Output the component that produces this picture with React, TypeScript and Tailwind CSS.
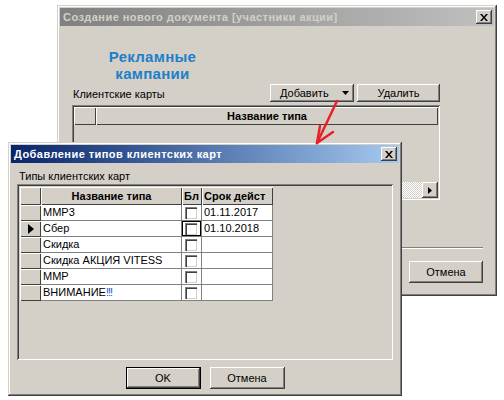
import React from "react";

const raised =
  "bg-[#d4d0c8] shadow-[inset_-1px_-1px_#404040,inset_1px_1px_#ffffff,inset_-2px_-2px_#808080,inset_2px_2px_#d4d0c8]";
const frame =
  "bg-[#d4d0c8] shadow-[inset_-1px_-1px_#404040,inset_1px_1px_#d4d0c8,inset_-2px_-2px_#808080,inset_2px_2px_#ffffff]";
const sunken =
  "shadow-[inset_1px_1px_#808080,inset_-1px_-1px_#ffffff,inset_2px_2px_#404040,inset_-2px_-2px_#d4d0c8]";
const hdr = "bg-[#d4d0c8] shadow-[inset_1px_1px_#ffffff,inset_-1px_-1px_#404040]";

function CloseBox() {
  return (
    <div className={`w-[16px] h-[14px] flex items-center justify-center ${raised}`}>
      <svg width="8" height="7" viewBox="0 0 8 7">
        <path d="M0 0h2l2 2.5L6 0h2L5 3.5 8 7H6L4 4.5 2 7H0l3-3.5z" fill="#000" />
      </svg>
    </div>
  );
}

function TitleBar({ text, active }: { text: string; active?: boolean }) {
  return (
    <div
      className={`h-[18px] flex items-center justify-between pl-[3px] pr-[2px] ${
        active ? "bg-linear-to-r from-[#0a246a] to-[#a6caf0]" : "bg-linear-to-r from-[#808080] to-[#c0c0c0]"
      }`}
    >
      <span
        className={`text-[11px] font-bold whitespace-nowrap tracking-[0.45px] ${
          active ? "text-white" : "text-[#d4d0c8]"
        }`}
      >
        {text}
      </span>
      <CloseBox />
    </div>
  );
}

function Btn({ children, className = "", def }: { children: React.ReactNode; className?: string; def?: boolean }) {
  if (def) {
    return (
      <div className={`border border-black ${className}`}>
        <div className={`w-full h-full flex items-center justify-center text-[11px] ${raised}`}>{children}</div>
      </div>
    );
  }
  return <div className={`flex items-center justify-center text-[11px] ${raised} ${className}`}>{children}</div>;
}

function Check() {
  return (
    <div className="w-[12px] h-[12px] bg-white border-t border-l border-[#808080] shadow-[inset_1px_1px_#404040,inset_-1px_-1px_#d4d0c8]" />
  );
}

const rows = [
  { name: "ММР3", date: "01.11.2017" },
  { name: "Сбер", date: "01.10.2018", current: true },
  { name: "Скидка", date: "" },
  { name: "Скидка АКЦИЯ VITESS", date: "" },
  { name: "ММР", date: "" },
  { name: "ВНИМАНИЕ", date: "", bang: true },
];

const cell = "h-[16px] bg-white border-r border-b border-[#808080] text-[11px] leading-[15px] pl-[2px] whitespace-nowrap overflow-hidden";

export default function App() {
  return (
    <div className="relative w-[504px] h-[400px] bg-white overflow-hidden text-black font-['Liberation_Sans',Arial,sans-serif]">
      {/* back window */}
      <div className={`absolute left-[57px] top-[5px] w-[440px] h-[291px] p-[3px] flex flex-col ${frame}`}>
        <TitleBar text="Создание нового документа [участники акции]" />
        <div className="w-[185px] mt-[22px] text-center text-[15px] leading-[17px] font-bold tracking-[0.3px] text-[#1e7fc8]">
          Рекламные
          <br />
          кампании
        </div>
        <div className="flex items-end mt-[2px] h-[18px]">
          <div className="w-[210px] pl-[13px] text-[11px] leading-[13px] mb-[1px]">Клиентские карты</div>
          <Btn className="w-[84px] h-[18px] !justify-start pl-[10px]">
            <span>
              <span className="underline underline-offset-1">Д</span>обавить
            </span>
            <svg width="7" height="4" viewBox="0 0 7 4" className="ml-[13px]">
              <path d="M0 0h7L3.5 4z" fill="#000" />
            </svg>
          </Btn>
          <Btn className="ml-[3px] w-[83px] h-[18px]">Удалить</Btn>
        </div>
        <div className={`mt-[3px] ml-[12px] w-[368px] h-[95px] p-[2px] flex flex-col ${sunken}`}>
          <div className="flex h-[18px]">
            <div className={`w-[22px] ${hdr}`} />
            <div className={`flex-1 text-center text-[11px] leading-[18px] font-bold ${hdr}`}>Название типа</div>
          </div>
          <div className="flex-1" />
          <div className="flex h-[16px]">
            <div className="flex-1 bg-[repeating-conic-gradient(#ffffff_0%_25%,#d4d0c8_0%_50%)] bg-[length:2px_2px]" />
            <div className={`w-[16px] flex items-center justify-center ${raised}`}>
              <svg width="4" height="7" viewBox="0 0 4 7">
                <path d="M0 0l4 3.5L0 7z" fill="#000" />
              </svg>
            </div>
          </div>
        </div>
        <div className="mt-[47px] ml-[11px] w-[412px] border-t border-[#808080] border-b border-b-white" />
        <Btn className="mt-[12px] ml-[349px] w-[74px] h-[22px]">Отмена</Btn>
      </div>

      {/* front dialog */}
      <div className={`absolute left-[8px] top-[142px] w-[394px] h-[254px] p-[3px] flex flex-col ${frame}`}>
        <TitleBar text="Добавление типов клиентских карт" active />
        <div className="mt-[7px] pl-[8px] text-[11px] leading-[13px]">Типы клиентских карт</div>
        <div className={`mt-[1px] ml-[6px] w-[376px] h-[176px] p-[2px] ${sunken}`}>
          <div className="mt-[1px] ml-[1px] grid grid-cols-[21px_141px_20px_71px] w-max">
            <div className={`h-[18px] ${hdr}`} />
            <div className={`h-[18px] text-center text-[11px] leading-[18px] font-bold ${hdr}`}>Название типа</div>
            <div className={`h-[18px] pl-[2px] text-[11px] leading-[18px] font-bold ${hdr}`}>Бл</div>
            <div className={`h-[18px] pl-[2px] text-[11px] leading-[18px] font-bold whitespace-nowrap overflow-hidden ${hdr}`}>
              Срок дейст
            </div>
            {rows.map((r) => (
              <React.Fragment key={r.name}>
                <div className={`h-[16px] flex items-center justify-center ${hdr}`}>
                  {r.current && (
                    <svg width="6" height="10" viewBox="0 0 6 10">
                      <path d="M0 0l6 5-6 5z" fill="#000" />
                    </svg>
                  )}
                </div>
                <div className={cell}>
                  {r.name}
                  {r.bang && <span className="text-[#3050d0] tracking-[-1px]">!!!</span>}
                </div>
                <div
                  className={`h-[16px] bg-white border-r border-b border-[#808080] flex items-center pl-[3px] ${
                    r.current ? "shadow-[inset_0_0_0_1px_#000000]" : ""
                  }`}
                >
                  <Check />
                </div>
                <div className={cell}>{r.date}</div>
              </React.Fragment>
            ))}
          </div>
        </div>
        <div className="mt-[7px] flex justify-center gap-[9px]">
          <Btn def className="w-[75px] h-[22px]">
            OK
          </Btn>
          <Btn className="w-[75px] h-[22px]">Отмена</Btn>
        </div>
      </div>

      {/* red annotation arrow */}
      <svg className="absolute inset-0 pointer-events-none" width="504" height="400" viewBox="0 0 504 400">
        <g stroke="#e8202a" strokeWidth="2.5" strokeLinecap="round" fill="none">
          <path d="M337 101L317 143" />
          <path d="M317 143L320 126" />
          <path d="M317 143L333 132" />
        </g>
      </svg>
    </div>
  );
}
